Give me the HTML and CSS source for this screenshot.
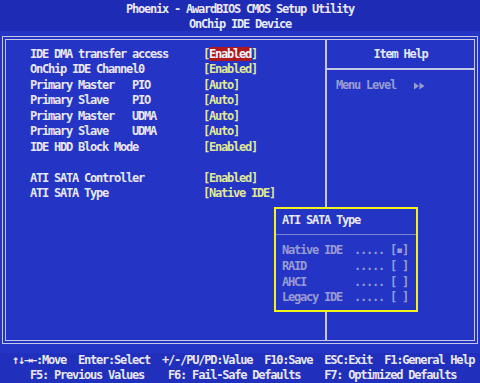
FILE: index.html
```html
<!DOCTYPE html>
<html lang="en">
<head>
    <meta charset="UTF-8">
    <title>Phoenix - AwardBIOS CMOS Setup Utility</title>
    <link rel="stylesheet" href="styles.css">
</head>
<body>
    <div class="screen">
        <div class="title">
            <div>Phoenix - AwardBIOS CMOS Setup Utility</div>
            <div>OnChip IDE Device</div>
        </div>

        <div class="frame">
            <div class="setup">
                <div class="row"><span class="label">IDE DMA transfer access</span><span class="value">[<span class="selected">Enabled</span>]</span></div>
                <div class="row"><span class="label">OnChip IDE Channel0</span><span class="value">[Enabled]</span></div>
                <div class="row"><span class="label">Primary Master   PIO</span><span class="value">[Auto]</span></div>
                <div class="row"><span class="label">Primary Slave    PIO</span><span class="value">[Auto]</span></div>
                <div class="row"><span class="label">Primary Master   UDMA</span><span class="value">[Auto]</span></div>
                <div class="row"><span class="label">Primary Slave    UDMA</span><span class="value">[Auto]</span></div>
                <div class="row"><span class="label">IDE HDD Block Mode</span><span class="value">[Enabled]</span></div>
                <div class="row"></div>
                <div class="row"><span class="label">ATI SATA Controller</span><span class="value">[Enabled]</span></div>
                <div class="row"><span class="label">ATI SATA Type</span><span class="value">[Native IDE]</span></div>
            </div>
            <div class="help">
                <div class="help-head">Item Help</div>
                <div class="help-body">Menu Level   <svg class="arrows" width="11" height="8" viewBox="0 0 11 8"><path d="M0 0.5 L5 4 L0 7.5 Z M5.5 0.5 L10.5 4 L5.5 7.5 Z" fill="#959dd2"/></svg></div>
            </div>
        </div>

        <div class="keys">
            <div class="keys-1">↑↓→←:Move  Enter:Select  +/-/PU/PD:Value  F10:Save  ESC:Exit  F1:General Help</div>
            <div class="keys-2">F5: Previous Values    F6: Fail-Safe Defaults    F7: Optimized Defaults</div>
        </div>

        <!-- options popup -->
        <div class="popup">
            <div class="popup-title">ATI SATA Type</div>
            <div class="popup-list">
                <div class="option">Native IDE  ..... [▪]</div>
                <div class="option">RAID        ..... [ ]</div>
                <div class="option">AHCI        ..... [ ]</div>
                <div class="option">Legacy IDE  ..... [ ]</div>
            </div>
        </div>
    </div>
</body>
</html>
```

FILE: styles.css
```css
body {
    margin: 0;
    background: #2232c2;
    overflow: hidden;
}
.screen {
    position: relative;
    width: 480px;
    height: 383px;
    background: #2434c4;
    color: #e6e8f4;
    font-family: "DejaVu Sans Mono", "Liberation Mono", monospace;
    font-weight: bold;
    font-size: 12px;
    letter-spacing: -1.22px;
}
.title {
    height: 29px;
    padding-top: 2px;
    line-height: 15px;
    text-align: center;
    background: #1e2bb4;
}
.frame {
    display: flex;
    box-sizing: border-box;
    height: 308px;
    margin: 5px 2px 0 2px;
    border: 4px double #c4c8e6;
}
.setup {
    width: 295px;
    padding: 7px 0 0 24px;
    line-height: 15.45px;
}
.row {
    display: grid;
    grid-template-columns: 173px auto;
    height: 15.45px;
}
.label {
    white-space: pre;
}
.value {
    color: #e2e69a;
}
.selected {
    display: inline-block;
    line-height: 14px;
    background: #b01820;
    color: #f4f4f8;
}
.help {
    flex: 1;
    border-left: 2px solid #c4c8e6;
}
.help-head {
    padding: 7px 0 6px 0;
    line-height: 15.45px;
    text-align: center;
    border-bottom: 2px solid #c4c8e6;
}
.help-body {
    padding: 8px 0 0 9px;
    line-height: 15.45px;
    color: #959dd2;
    white-space: pre;
}
.arrows {
    vertical-align: -1px;
}
.keys {
    margin-top: 9px;
    line-height: 15px;
    background: #2030bc;
}
.keys-1,
.keys-2 {
    white-space: pre;
}
.keys-1 {
    padding-left: 12px;
}
.keys-2 {
    padding-left: 30px;
}
.popup {
    position: absolute;
    left: 274px;
    top: 207px;
    width: 144px;
    height: 105px;
    box-sizing: border-box;
    border: 2px solid #f2f21c;
    background: #2434c4;
}
.popup-title {
    padding: 4px 0 6px 6px;
    line-height: 15.4px;
    border-bottom: 1px solid #7c86cc;
}
.popup-list {
    padding: 8px 0 0 6px;
    line-height: 15.6px;
    color: #959dd2;
}
.option {
    white-space: pre;
}
```
